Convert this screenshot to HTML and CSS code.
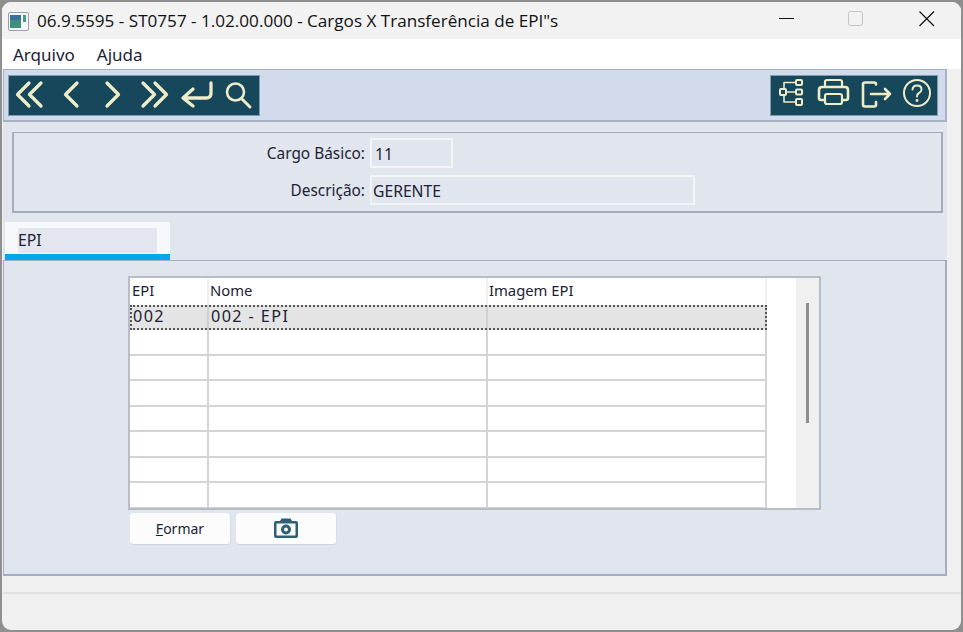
FILE: index.html
```html
<!DOCTYPE html>
<html lang="pt">
<head>
<meta charset="utf-8">
<title>Cargos X Transferência de EPI</title>
<link rel="stylesheet" href="styles.css">
</head>
<body>
<div class="window">
  <header class="titlebar">
    <svg class="appicon" width="21" height="19" viewBox="0 0 21 19">
      <rect x="0.5" y="0.5" width="20" height="18" rx="1.5" fill="#f4f6f8" stroke="#9aa0a6"/>
      <rect x="2" y="3" width="11" height="13" fill="#3f8f7e"/>
      <rect x="2" y="3" width="11" height="5" fill="#3a6f9e"/>
      <rect x="15" y="3" width="3" height="7" fill="#4a9a8a"/>
    </svg>
    <span class="title">06.9.5595 - ST0757 - 1.02.00.000 - Cargos X Transferência de EPI"s</span>
    <div class="winctrls">
      <svg class="ctl" width="16" height="16" viewBox="0 0 16 16"><path d="M0 7.500H15" stroke="#111" stroke-width="1"/></svg>
      <svg class="ctl ctl-max" width="16" height="16" viewBox="0 0 16 16"><rect x="0.500" y="0.500" width="14" height="14" rx="2" fill="none" stroke="#c4c4c4"/></svg>
      <svg class="ctl" width="16" height="16" viewBox="0 0 16 16"><path d="M0.500 0.500L15 15M15 0.500L0.500 15" stroke="#111" stroke-width="1.200"/></svg>
    </div>
  </header>
  <nav class="menubar"><span>Arquivo</span><span>Ajuda</span></nav>
  <div class="client">
    <div class="toolbar">
      <div class="tbgroup">
        <svg width="252" height="41" viewBox="0 0 252 41" fill="none" stroke="#efecc9" stroke-width="3.300" stroke-linecap="round" stroke-linejoin="round">
          <path d="M21 8L9.500 19.500L21 31M33 8L21.500 19.500L33 31"/>
          <path d="M69 8L57.500 19.500L69 31"/>
          <path d="M99 8L110.500 19.500L99 31"/>
          <path d="M135 8L146.500 19.500L135 31M147 8L158.500 19.500L147 31"/>
          <path d="M203 8V18Q203 23 198 23H175M185 14L175 23L185 31"/>
          <circle cx="227.500" cy="17" r="8.500" stroke-width="2.600"/>
          <path d="M234 24L242 32" stroke-width="3"/>
        </svg>
      </div>
      <div class="tbgroup">
        <svg width="168" height="41" viewBox="0 0 168 41" fill="none" stroke="#efecc9" stroke-width="2" stroke-linecap="round" stroke-linejoin="round">
          <rect x="10" y="14" width="6" height="6" rx="1"/>
          <rect x="26" y="5" width="6" height="5" rx="1"/>
          <rect x="26" y="14.500" width="6" height="5" rx="1"/>
          <rect x="26" y="24" width="6" height="6" rx="1"/>
          <path d="M16 17H26M20 7.500H26M20 27H26M14 14V7.500H20M14 20V27H20" stroke-width="1.600"/>
          <path d="M55 12V7Q55 5 57 5H70Q72 5 72 7V12" stroke-width="2.200"/>
          <path d="M54 25H51Q49 25 49 23V15Q49 12 52 12H75Q78 12 78 15V23Q78 25 76 25H73" stroke-width="2.600"/>
          <rect x="55" y="19" width="17" height="10" rx="2" stroke-width="2.200"/>
          <path d="M106 9.500V9Q106 7.500 104 7.500H95Q93 7.500 93 9.500V29.500Q93 31.500 95 31.500H104Q106 31.500 106 29.500V27" stroke-width="2.600"/>
          <path d="M101 19H120M115 14L120 19L115 24" stroke-width="2.600"/>
          <circle cx="147" cy="18" r="13" stroke-width="2"/>
          <path d="M142.500 14.500Q143 10.500 147 10.500Q151.500 10.500 151.500 14.500Q151.500 16.500 149 18Q147 19 147 21.500" stroke-width="2"/>
          <circle cx="147" cy="25.500" r="0.700" stroke-width="1.500"/>
        </svg>
      </div>
    </div>
    <div class="body">
      <section class="filters">
        <div class="field"><label>Cargo Básico:</label><div class="input short"><span class="inset">11</span></div></div>
        <div class="field"><label>Descrição:</label><div class="input long">GERENTE</div></div>
      </section>
      <div class="tabs"><div class="tab"><span>EPI</span></div></div>
    </div>
    <section class="tabpanel">
      <div class="grid">
        <div class="table">
          <div class="row head"><div>EPI</div><div>Nome</div><div>Imagem EPI</div></div>
          <div class="row selected"><div>002</div><div>002 - EPI</div><div></div></div>
          <div class="row"><div></div><div></div><div></div></div>
          <div class="row"><div></div><div></div><div></div></div>
          <div class="row"><div></div><div></div><div></div></div>
          <div class="row"><div></div><div></div><div></div></div>
          <div class="row"><div></div><div></div><div></div></div>
          <div class="row"><div></div><div></div><div></div></div>
          <div class="row"><div></div><div></div><div></div></div>
        </div>
        <div class="gutter"></div>
        <div class="scroll"><div class="thumb"></div></div>
      </div>
      <div class="actions">
        <button class="btn"><u>F</u>ormar</button>
        <button class="btn">
          <svg class="cam" width="24" height="20" viewBox="0 0 24 20">
            <path fill="#2f5f74" fill-rule="evenodd" d="M7.500 0.500H16.500L18 3H22Q24 3 24 5V18Q24 20 22 20H2Q0 20 0 18V5Q0 3 2 3H6ZM2.500 5.500V17.500H21.500V5.500ZM12 6.500A5 5 0 1 1 12 16.500A5 5 0 1 1 12 6.500ZM12 9.500A2 2 0 1 0 12 13.500A2 2 0 1 0 12 9.500Z"/>
          </svg>
        </button>
      </div>
    </section>
    <footer class="statusgap"></footer>
    <div class="statusbar"></div>
  </div>
</div>
</body>
</html>
```

FILE: styles.css
```css
* { box-sizing: border-box; }
html, body { margin: 0; height: 100%; }
body {
  background: #8f8f8f;
  padding: 2px;
  overflow: hidden;
  font-family: "Noto Sans", sans-serif;
  font-size: 14px;
  color: #1c2233;
}
.window {
  height: 628px;
  border-radius: 9px;
  background: #f0f0f0;
  overflow: hidden;
  display: flex;
  flex-direction: column;
}
.titlebar {
  height: 37px;
  flex: none;
  background: #f2f2f2;
  display: flex;
  align-items: center;
  padding-left: 6px;
}
.appicon { flex: none; margin-top: 1px; }
.title {
  margin-left: 8px;
  font-family: "Open Sans", sans-serif;
  font-size: 17.100px;
  color: #111;
  white-space: nowrap;
}
.winctrls {
  margin-left: auto;
  margin-top: -3px;
  display: flex;
  gap: 54px;
  padding-right: 26px;
}
.ctl { display: block; }
.ctl-max { position: relative; left: -1px; }
.menubar {
  height: 30px;
  flex: none;
  background: #fff;
  display: flex;
  gap: 22px;
  align-items: center;
  padding: 0 0 0 11px;
  font-size: 17px;
}
.client {
  flex: 1;
  min-height: 0;
  display: flex;
  flex-direction: column;
  padding-left: 1px;
}
.toolbar {
  width: 944px;
  height: 53px;
  flex: none;
  background: #d2dbeb;
  border: 2px solid #a7b1c4;
  border-width: 1px 2px 2px 1px;
  display: flex;
  justify-content: space-between;
  padding: 5px 7px 0 4px;
}
.tbgroup {
  height: 41px;
  background: #16475a;
  outline: 1px solid #7f9bb0;
  outline-offset: -1px;
}
.tbgroup svg { display: block; }
.body {
  width: 944px;
  flex: none;
  height: 138px;
  background: #e1e5ee;
  padding: 10px 4px 0 9px;
  display: flex;
  flex-direction: column;
}
.filters {
  height: 81px;
  flex: none;
  border: 2px solid #a4acbb;
  border-width: 1px 2px 2px 2px;
  padding-top: 5px;
  display: flex;
  flex-direction: column;
  gap: 7px;
}
.field {
  display: flex;
  align-items: center;
  height: 30px;
}
.field label {
  width: 351px;
  text-align: right;
  font-size: 15.400px;
  white-space: nowrap;
}
.input {
  height: 30px;
  margin-left: 5px;
  border: 2px solid #f2f4f8;
  display: flex;
  align-items: center;
  padding: 2px 0 0 1px;
  font-size: 15.700px;
}
.inset { padding-left: 2px; }
.short { width: 83px; }
.long { width: 325px; }
.tabs {
  margin: 9px 0 0 -7px;
  height: 38px;
  flex: none;
}
.tab {
  width: 165px;
  height: 38px;
  background: #f7f8fb;
  border-bottom: 6px solid #06a7e8;
  padding: 6px 13px 1px 13px;
}
.tab span {
  display: block;
  height: 25px;
  background: #e3e6ee;
  font-size: 15.800px;
  line-height: 24px;
}
.tabpanel {
  width: 944px;
  height: 316px;
  flex: none;
  background: #e1e5ee;
  border: 2px solid #a4aec2;
  border-width: 1px 2px 2px 1px;
  padding: 15px 0 0 124px;
}
.grid {
  width: 693px;
  height: 234px;
  border: 2px solid #b7bcc6;
  background: #fff;
  display: flex;
  overflow: hidden;
}
.table {
  width: 637px;
  flex: none;
  display: flex;
  flex-direction: column;
}
.row {
  display: grid;
  grid-template-columns: 79px 279px 279px;
  height: 25.500px;
  flex: none;
  border-bottom: 2px solid #d4d4d4;
  font-size: 14.800px;
  line-height: 23px;
}
.row > div {
  border-right: 2px solid #d4d4d4;
  padding-left: 2px;
  white-space: nowrap;
}
.row > div:first-child { padding-left: 3px; }
.row.head { border-bottom: 0; height: 27px; line-height: 24px; }
.row.head > div { border-right: 2px solid #efefef; padding-left: 1px; }
.row.head > div:first-child { padding-left: 2px; }
.row.selected {
  height: 25px;
  background: #e4e4e4;
  outline: 2px dotted #555;
  outline-offset: -2px;
  border-bottom: 0;
  font-size: 16.200px;
  letter-spacing: 1.400px;
  line-height: 22px;
}
.row.selected > div { border-right: 2px solid #d0d0d0; padding-left: 2px; }
.row.selected > div:first-child { padding-left: 3px; }
.gutter { width: 29px; flex: none; }
.scroll {
  flex: 1;
  background: #f0f0f0;
  position: relative;
}
.thumb {
  position: absolute;
  left: 10px;
  top: 25px;
  width: 3px;
  height: 120px;
  background: #8e8e8e;
}
.actions {
  display: flex;
  gap: 5px;
  margin: 3px 0 0 2px;
}
.btn {
  width: 101px;
  height: 32px;
  padding: 0;
  background: #fcfcfc;
  border: 0;
  border-bottom: 1px solid #d0d3da;
  border-right: 1px solid #d8dbe2;
  border-radius: 4px;
  font-family: "Noto Sans", sans-serif;
  font-size: 14px;
  color: #1c2233;
  display: flex;
  align-items: center;
  justify-content: center;
}
.cam { margin-top: -2px; }
.statusgap {
  height: 18px;
  flex: none;
  border-bottom: 2px solid #e0e0e0;
}
.statusbar { flex: 1; }
```
